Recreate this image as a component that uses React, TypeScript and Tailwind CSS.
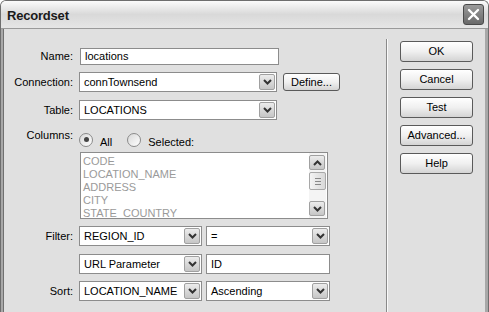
import React from "react";

const font = { fontFamily: '"Liberation Sans", Arial, sans-serif' };

const Chevron = ({ up = false }: { up?: boolean }) => (
    <svg width="9" height="6" viewBox="0 0 9 6" className={up ? "rotate-180" : ""}>
        <polyline points="1,1 4.5,4.5 8,1" fill="none" stroke="#333" strokeWidth="2" />
    </svg>
);

const ArrowBtn = ({ up = false, className = "" }: { up?: boolean; className?: string }) => (
    <div
        className={`w-[16px] flex items-center justify-center rounded-[2px] border border-[#a0a0a0] bg-gradient-to-b from-[#ececec] to-[#c6c6c6] ${className}`}
    >
        <Chevron up={up} />
    </div>
);

const Select = ({ value, width }: { value: string; width: string }) => (
    <div className={`${width} h-[20px] flex items-stretch bg-white border border-[#8c8c8c] p-[1px]`}>
        <div className="flex-1 pl-[3px] flex items-center text-[11px] text-black whitespace-nowrap overflow-hidden">
            {value}
        </div>
        <ArrowBtn />
    </div>
);

const Input = ({ value, width, h = "h-[19px]" }: { value: string; width: string; h?: string }) => (
    <div className={`${width} ${h} flex items-center bg-white border border-[#8c8c8c] pl-[4px] text-[11px] text-black`}>
        {value}
    </div>
);

const Btn = ({ label, className = "" }: { label: string; className?: string }) => (
    <div
        className={`flex items-center justify-center rounded-[3px] border border-[#5a5a5a] bg-gradient-to-b from-[#ffffff] via-[#f0f0f0] to-[#d4d4d4] text-[11px] text-black ${className}`}
    >
        {label}
    </div>
);

const Radio = ({ checked }: { checked?: boolean }) => (
    <div className="w-[14px] h-[14px] rounded-full border border-[#8a8a8a] bg-gradient-to-br from-[#d8d8d8] to-[#ffffff] flex items-center justify-center">
        {checked && <div className="w-[5px] h-[5px] rounded-full bg-[#444]" />}
    </div>
);

const Label = ({ text, className = "" }: { text: string; className?: string }) => (
    <div className={`w-[70px] text-right pr-[1px] text-[11px] text-black ${className}`}>{text}</div>
);

export default function App() {
    return (
        <div
            style={font}
            className="w-[489px] h-[312px] flex flex-col bg-[#e0e0e0] border-x border-t border-[#6e6e6e] rounded-t-[6px] overflow-hidden"
        >
            {/* title bar */}
            <div className="h-[28px] shrink-0 flex items-center justify-between pl-[6px] pr-[4px] bg-gradient-to-b from-[#fbfbfb] via-[#d9d9d9] to-[#e6e6e6] border-b border-[#9a9a9a]">
                <span className="text-[13px] font-bold text-[#1a1a1a] tracking-[-0.2px] mt-[2px]">Recordset</span>
                <div className="w-[21px] h-[21px] rounded-[3px] border border-[#4a4a4a] bg-gradient-to-b from-[#9a9a9a] to-[#6a6a6a] flex items-center justify-center">
                    <svg width="13" height="13" viewBox="0 0 13 13">
                        <path d="M2 2 L11 11 M11 2 L2 11" stroke="white" strokeWidth="2.4" strokeLinecap="round" />
                    </svg>
                </div>
            </div>

            {/* body */}
            <div className="flex-1 flex border-l-[2px] border-r-[3px] border-[#a8a8a8]">
                <div className="w-[383px] flex flex-col border-l border-[#707070]">
                    <div className="flex items-center mt-[19px] gap-[5px]">
                        <Label text="Name:" />
                        <Input value="locations" width="w-[199px] ml-[1px]" h="h-[17px]" />
                    </div>
                    <div className="flex items-center mt-[7px] gap-[5px]">
                        <Label text="Connection:" />
                        <Select value="connTownsend" width="w-[198px]" />
                        <Btn label="Define..." className="w-[57px] h-[18px] ml-[1px]" />
                    </div>
                    <div className="flex items-center mt-[8px] gap-[5px]">
                        <Label text="Table:" />
                        <Select value="LOCATIONS" width="w-[198px]" />
                    </div>
                    <div className="flex items-start mt-[9px] gap-[5px] h-[16px]">
                        <Label text="Columns:" className="mt-[-2px]" />
                        <div className="flex items-center">
                            <Radio checked />
                            <span className="text-[11px] ml-[7px] mt-[5px]">All</span>
                            <div className="ml-[15px]">
                                <Radio />
                            </div>
                            <span className="text-[11px] ml-[7px] mt-[5px]">Selected:</span>
                        </div>
                    </div>
                    <div className="flex mt-[7px]">
                        <div className="w-[76px]" />
                        <div className="w-[248px] h-[67px] bg-white border border-[#8c8c8c] flex overflow-hidden">
                            <div className="flex-1 flex flex-col pl-[2px] pt-[2px] text-[11px] leading-[13px] text-[#9a9a9a]">
                                <span>CODE</span>
                                <span>LOCATION_NAME</span>
                                <span>ADDRESS</span>
                                <span>CITY</span>
                                <span>STATE_COUNTRY</span>
                            </div>
                            <div className="w-[17px] flex flex-col justify-between py-[2px] mr-[1px] bg-[#f4f4f4]">
                                <ArrowBtn up className="h-[15px]" />
                                <div className="flex-1 flex flex-col pt-[2px]">
                                    <div className="h-[18px] rounded-[2px] border border-[#a8a8a8] bg-gradient-to-r from-[#f4f4f4] to-[#d8d8d8] flex flex-col items-center justify-center gap-[2px]">
                                        <div className="w-[6px] h-px bg-[#888]" />
                                        <div className="w-[6px] h-px bg-[#888]" />
                                        <div className="w-[6px] h-px bg-[#888]" />
                                    </div>
                                </div>
                                <ArrowBtn className="h-[15px]" />
                            </div>
                        </div>
                    </div>
                    <div className="flex items-center mt-[7px] gap-[5px]">
                        <Label text="Filter:" />
                        <Select value="REGION_ID" width="w-[123px]" />
                        <Select value="=" width="w-[124px] -ml-[1px]" />
                    </div>
                    <div className="flex items-center mt-[8px] gap-[5px]">
                        <div className="w-[70px]" />
                        <Select value="URL Parameter" width="w-[123px]" />
                        <Input value="ID" width="w-[124px] -ml-[1px]" h="h-[20px]" />
                    </div>
                    <div className="flex items-center mt-[7px] gap-[5px]">
                        <Label text="Sort:" />
                        <Select value="LOCATION_NAME" width="w-[123px]" />
                        <Select value="Ascending" width="w-[124px] -ml-[1px]" />
                    </div>
                </div>

                {/* separator */}
                <div className="mt-[10px] flex">
                    <div className="w-px bg-[#8a8a8a]" />
                    <div className="w-px bg-[#fafafa]" />
                </div>

                {/* buttons */}
                <div className="flex-1 flex flex-col items-start pl-[12px] pt-[12px] gap-[7px]">
                    <Btn label="OK" className="w-[73px] h-[21px]" />
                    <Btn label="Cancel" className="w-[73px] h-[21px]" />
                    <Btn label="Test" className="w-[73px] h-[21px]" />
                    <Btn label="Advanced..." className="w-[73px] h-[21px]" />
                    <Btn label="Help" className="w-[73px] h-[21px]" />
                </div>
            </div>
        </div>
    );
}
